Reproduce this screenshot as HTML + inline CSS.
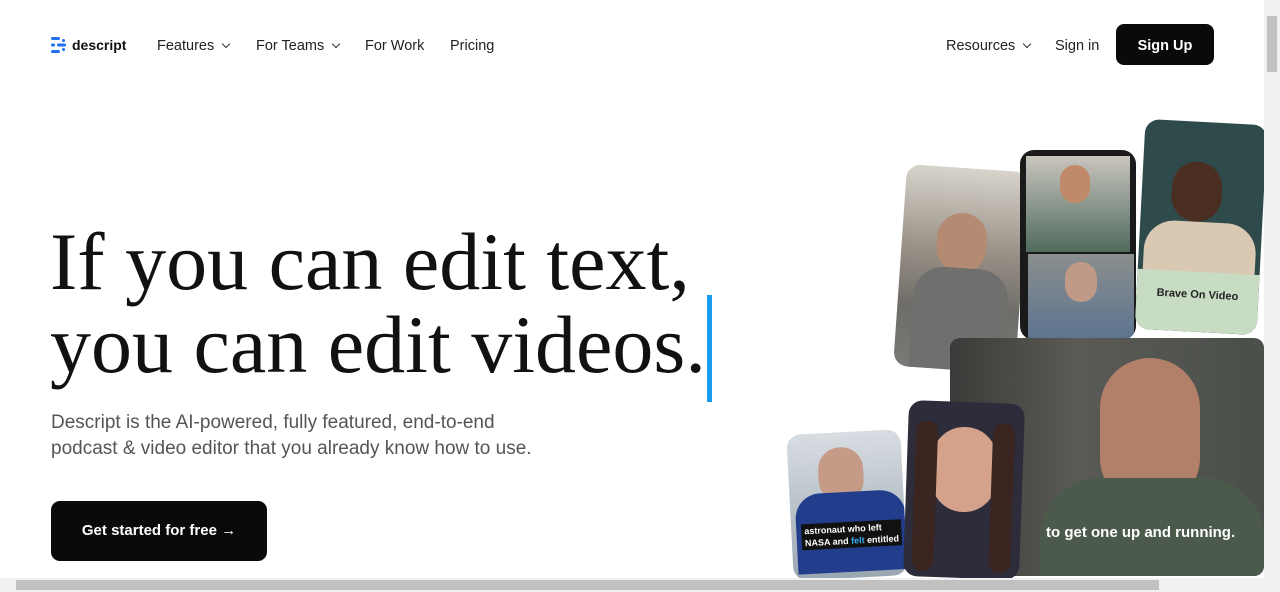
<!DOCTYPE html>
<html><head><meta charset="utf-8"><style>
*{margin:0;padding:0;box-sizing:border-box}
body{width:1280px;height:592px;overflow:hidden;background:#fff;font-family:"Liberation Sans",sans-serif;position:relative;color:#111}
.nav a{position:absolute;top:38px;font-size:14.5px;color:#222;text-decoration:none}
.chev{display:inline-block;width:6px;height:6px;border-right:1.5px solid #333;border-bottom:1.5px solid #333;transform:rotate(45deg);margin-left:9px;position:relative;top:-3px}
h1{position:absolute;left:50px;top:220px;font-family:"Liberation Serif",serif;font-weight:400;font-size:82px;line-height:83px;letter-spacing:0;color:#111;white-space:nowrap}
.sub{position:absolute;left:51px;top:410px;font-size:19px;line-height:26px;color:#555}
.btn{position:absolute;left:51px;top:501px;width:216px;height:60px;background:#0a0a0a;border-radius:9px;color:#fff;font-size:15px;font-weight:700;text-align:center;line-height:60px}
.card{position:absolute;border-radius:14px;overflow:hidden}
</style></head><body>
<div class="nav">
<svg style="position:absolute;left:51px;top:37px" width="16" height="16" viewBox="0 0 16 16"><g fill="#1f6ff2"><rect x="0" y="0" width="9" height="3" rx="1.5"/><rect x="0" y="6.5" width="4" height="3" rx="1.5"/><rect x="6" y="6.5" width="9" height="3" rx="1.5"/><rect x="0" y="13" width="9" height="3" rx="1.5"/><rect x="11" y="2" width="3" height="3" rx="1.5"/><rect x="11" y="11" width="3" height="3" rx="1.5"/></g></svg>
<a style="left:72px;top:37px;font-weight:700;font-size:14px;color:#111">descript</a>
<a style="left:157px">Features<span class="chev"></span></a>
<a style="left:256px">For Teams<span class="chev"></span></a>
<a style="left:365px">For Work</a>
<a style="left:450px">Pricing</a>
<a style="left:946px">Resources<span class="chev"></span></a>
<a style="left:1055px">Sign in</a>
</div>
<div style="position:absolute;left:1116px;top:24px;width:98px;height:41px;background:#0a0a0a;border-radius:8px;color:#fff;font-weight:700;font-size:14.5px;text-align:center;line-height:44px">Sign Up</div>
<h1>If you can edit text,<br>you can edit videos.</h1>
<div style="position:absolute;left:707px;top:295px;width:5px;height:107px;background:#1a9cf0"></div>
<div class="sub">Descript is the AI-powered, fully featured, end-to-end<br>podcast &amp; video editor that you already know how to use.</div>
<div class="btn">Get started for free →</div>

<div class="card" style="left:900px;top:168px;width:122px;height:202px;transform:rotate(4deg);background:linear-gradient(#d8d4cc 0%,#9a9288 40%,#6e6c68 70%,#7a7a78 100%)">
<div style="position:absolute;left:35px;top:45px;width:50px;height:60px;border-radius:25px;background:#b58a72"></div>
<div style="position:absolute;left:15px;top:100px;width:95px;height:110px;border-radius:30px 30px 0 0;background:#6f706d"></div></div>
<div class="card" style="left:1020px;top:150px;width:116px;height:190px;background:#1a1a1a;border-radius:14px">
<div style="position:absolute;left:6px;top:6px;width:104px;height:96px;background:linear-gradient(#c9c5be,#4f6a5c)"></div>
<div style="position:absolute;left:40px;top:15px;width:30px;height:38px;border-radius:15px;background:#c08a6a"></div>
<div style="position:absolute;left:8px;top:104px;width:106px;height:86px;background:linear-gradient(#8b8f8e,#5d7390)"></div>
<div style="position:absolute;left:45px;top:112px;width:32px;height:40px;border-radius:16px;background:#c09a86"></div></div>
<div class="card" style="left:1140px;top:122px;width:122px;height:210px;transform:rotate(3deg);background:#2f4a4a">
<div style="position:absolute;left:30px;top:40px;width:50px;height:60px;border-radius:25px;background:#4b2e22"></div>
<div style="position:absolute;left:5px;top:100px;width:112px;height:60px;background:#d9c9b2;border-radius:30px 30px 0 0"></div>
<div style="position:absolute;left:0;top:150px;width:122px;height:60px;background:#c8dcc4;font-size:11px;font-weight:700;text-align:center;line-height:46px;color:#222">Brave On Video</div></div>
<div class="card" style="left:950px;top:338px;width:314px;height:238px;border-radius:10px;background:linear-gradient(90deg,#3a3a38,#5a5a56 40%,#4a4f4a)">
<div style="position:absolute;left:150px;top:20px;width:100px;height:150px;border-radius:50px;background:#b28068"></div>
<div style="position:absolute;left:90px;top:140px;width:224px;height:100px;background:#4c5a4c;border-radius:60px 60px 0 0"></div>
<div style="position:absolute;left:96px;top:186px;color:#fff;font-weight:700;font-size:15px">to get one up and running.</div></div>
<div class="card" style="left:790px;top:432px;width:114px;height:146px;transform:rotate(-3deg);background:linear-gradient(#d8dde2,#9aa6b0)">
<div style="position:absolute;left:30px;top:15px;width:45px;height:55px;border-radius:22px;background:#c59a86"></div>
<div style="position:absolute;left:5px;top:60px;width:110px;height:80px;background:#213d8c;border-radius:25px 25px 0 0"></div>
<div style="position:absolute;left:10px;top:90px;background:#111;color:#fff;font-size:9px;font-weight:700;padding:1px 3px;line-height:12px">astronaut who left<br>NASA and <span style="color:#3ab0f0">felt</span> entitled</div></div>
<div class="card" style="left:906px;top:402px;width:116px;height:176px;transform:rotate(2deg);background:#2c2c3a">
<div style="position:absolute;left:25px;top:25px;width:65px;height:85px;border-radius:32px;background:#d4a28a"></div>
<div style="position:absolute;left:8px;top:20px;width:22px;height:150px;background:#3a2520;border-radius:10px"></div>
<div style="position:absolute;left:85px;top:20px;width:22px;height:150px;background:#3a2520;border-radius:10px"></div></div>
<div style="position:absolute;left:1264px;top:0;width:16px;height:578px;background:#f1f1f1"></div>
<div style="position:absolute;left:1267px;top:16px;width:10px;height:56px;background:#c1c1c1"></div>
<div style="position:absolute;left:0;top:578px;width:1280px;height:14px;background:#f1f1f1"></div>
<div style="position:absolute;left:16px;top:580px;width:1143px;height:10px;background:#c1c1c1"></div>
</body></html>
